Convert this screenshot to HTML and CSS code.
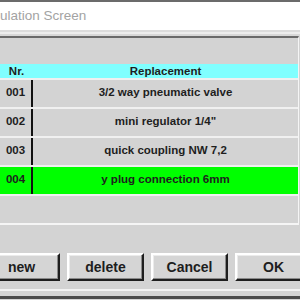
FILE: index.html
```html
<!DOCTYPE html>
<html>
<head>
<meta charset="utf-8">
<link rel="stylesheet" href="styles.css">
</head>
<body>
<div class="window">
  <div class="titlebar"><span class="title">ulation Screen</span></div>
  <div class="frame"></div>
  <div class="panel">
    <div class="grid">
      <div class="row head"><div class="cell nr">Nr.</div><div class="cell">Replacement</div></div>
      <div class="row"><div class="cell nr">001</div><div class="cell">3/2 way pneumatic valve</div></div>
      <div class="row"><div class="cell nr">002</div><div class="cell">mini regulator 1/4"</div></div>
      <div class="row"><div class="cell nr">003</div><div class="cell">quick coupling NW 7,2</div></div>
      <div class="row selected"><div class="cell nr">004</div><div class="cell">y plug connection 6mm</div></div>
    </div>
  </div>
  <div class="buttons">
    <button class="btn">new</button>
    <button class="btn">delete</button>
    <button class="btn">Cancel</button>
    <button class="btn">OK</button>
  </div>
  <div class="footer-line"></div>
  <div class="bottom-edge"></div>
</div>
</body>
</html>
```
FILE: styles.css
```css
* { box-sizing: border-box; }
html, body { margin: 0; padding: 0; }
body {
  width: 300px;
  height: 300px;
  overflow: hidden;
  background: #d3d3d3;
  font-family: "Liberation Sans", Arial, sans-serif;
  color: #1e1e1e;
}
.window { width: 300px; }
.titlebar {
  height: 30px;
  border-top: 2px solid #6b6b6b;
  background: #ffffff;
  display: flex;
  align-items: center;
  padding-bottom: 1px;
}
.title {
  font-family: "Liberation Sans", Arial, sans-serif;
  font-size: 13.5px;
  color: #a3a3a3;
  white-space: nowrap;
}
.frame {
  height: 6px;
  background: linear-gradient(#dcdcdc 0 2px, #ededed 2px 4px, #d8d8d8 4px 6px);
}
.panel {
  width: 299px;
  border-top: 2px solid #6a6a6a;
  border-right: 1px solid #f5f5f5;
  border-bottom: 2px solid #f5f5f5;
  padding: 26px 0 27px 0;
}
.grid { display: flex; flex-direction: column; }
.row {
  display: grid;
  grid-template-columns: 33px 1fr;
  height: 29px;
  border-bottom: 2px solid #f0f0f0;
  background: #d3d3d3;
  font-size: 11.5px;
  font-weight: bold;
}
.row.head {
  height: 16px;
  background: #80ffff;
}
.row.selected { background: #00ff00; }
.cell {
  display: flex;
  align-items: center;
  justify-content: center;
  padding-bottom: 4px;
  white-space: nowrap;
}
.row .nr { border-right: 2px solid #111111; }
.row.head .cell { padding-bottom: 0; }
.row.head .nr { border-right: none; }
.buttons {
  display: flex;
  gap: 7px;
  margin-left: -17px;
  margin-top: 28px;
}
.btn {
  flex: none;
  width: 77px;
  height: 28px;
  padding: 0;
  margin: 0;
  background: #d5d5d5;
  border: 2px solid;
  border-color: #ffffff #1e1e1e #1e1e1e #ffffff;
  box-shadow: inset -1px -1px 0 #8a8a8a, inset 1px 1px 0 #ebebeb;
  font-family: "Liberation Sans", Arial, sans-serif;
  font-size: 14px;
  font-weight: bold;
  color: #1e1e1e;
}
.footer-line {
  margin-top: 8px;
  height: 2px;
  background: #f2f2f2;
}
.bottom-edge {
  margin-top: 5px;
  height: 3px;
  background: #4a4a4a;
}
```
